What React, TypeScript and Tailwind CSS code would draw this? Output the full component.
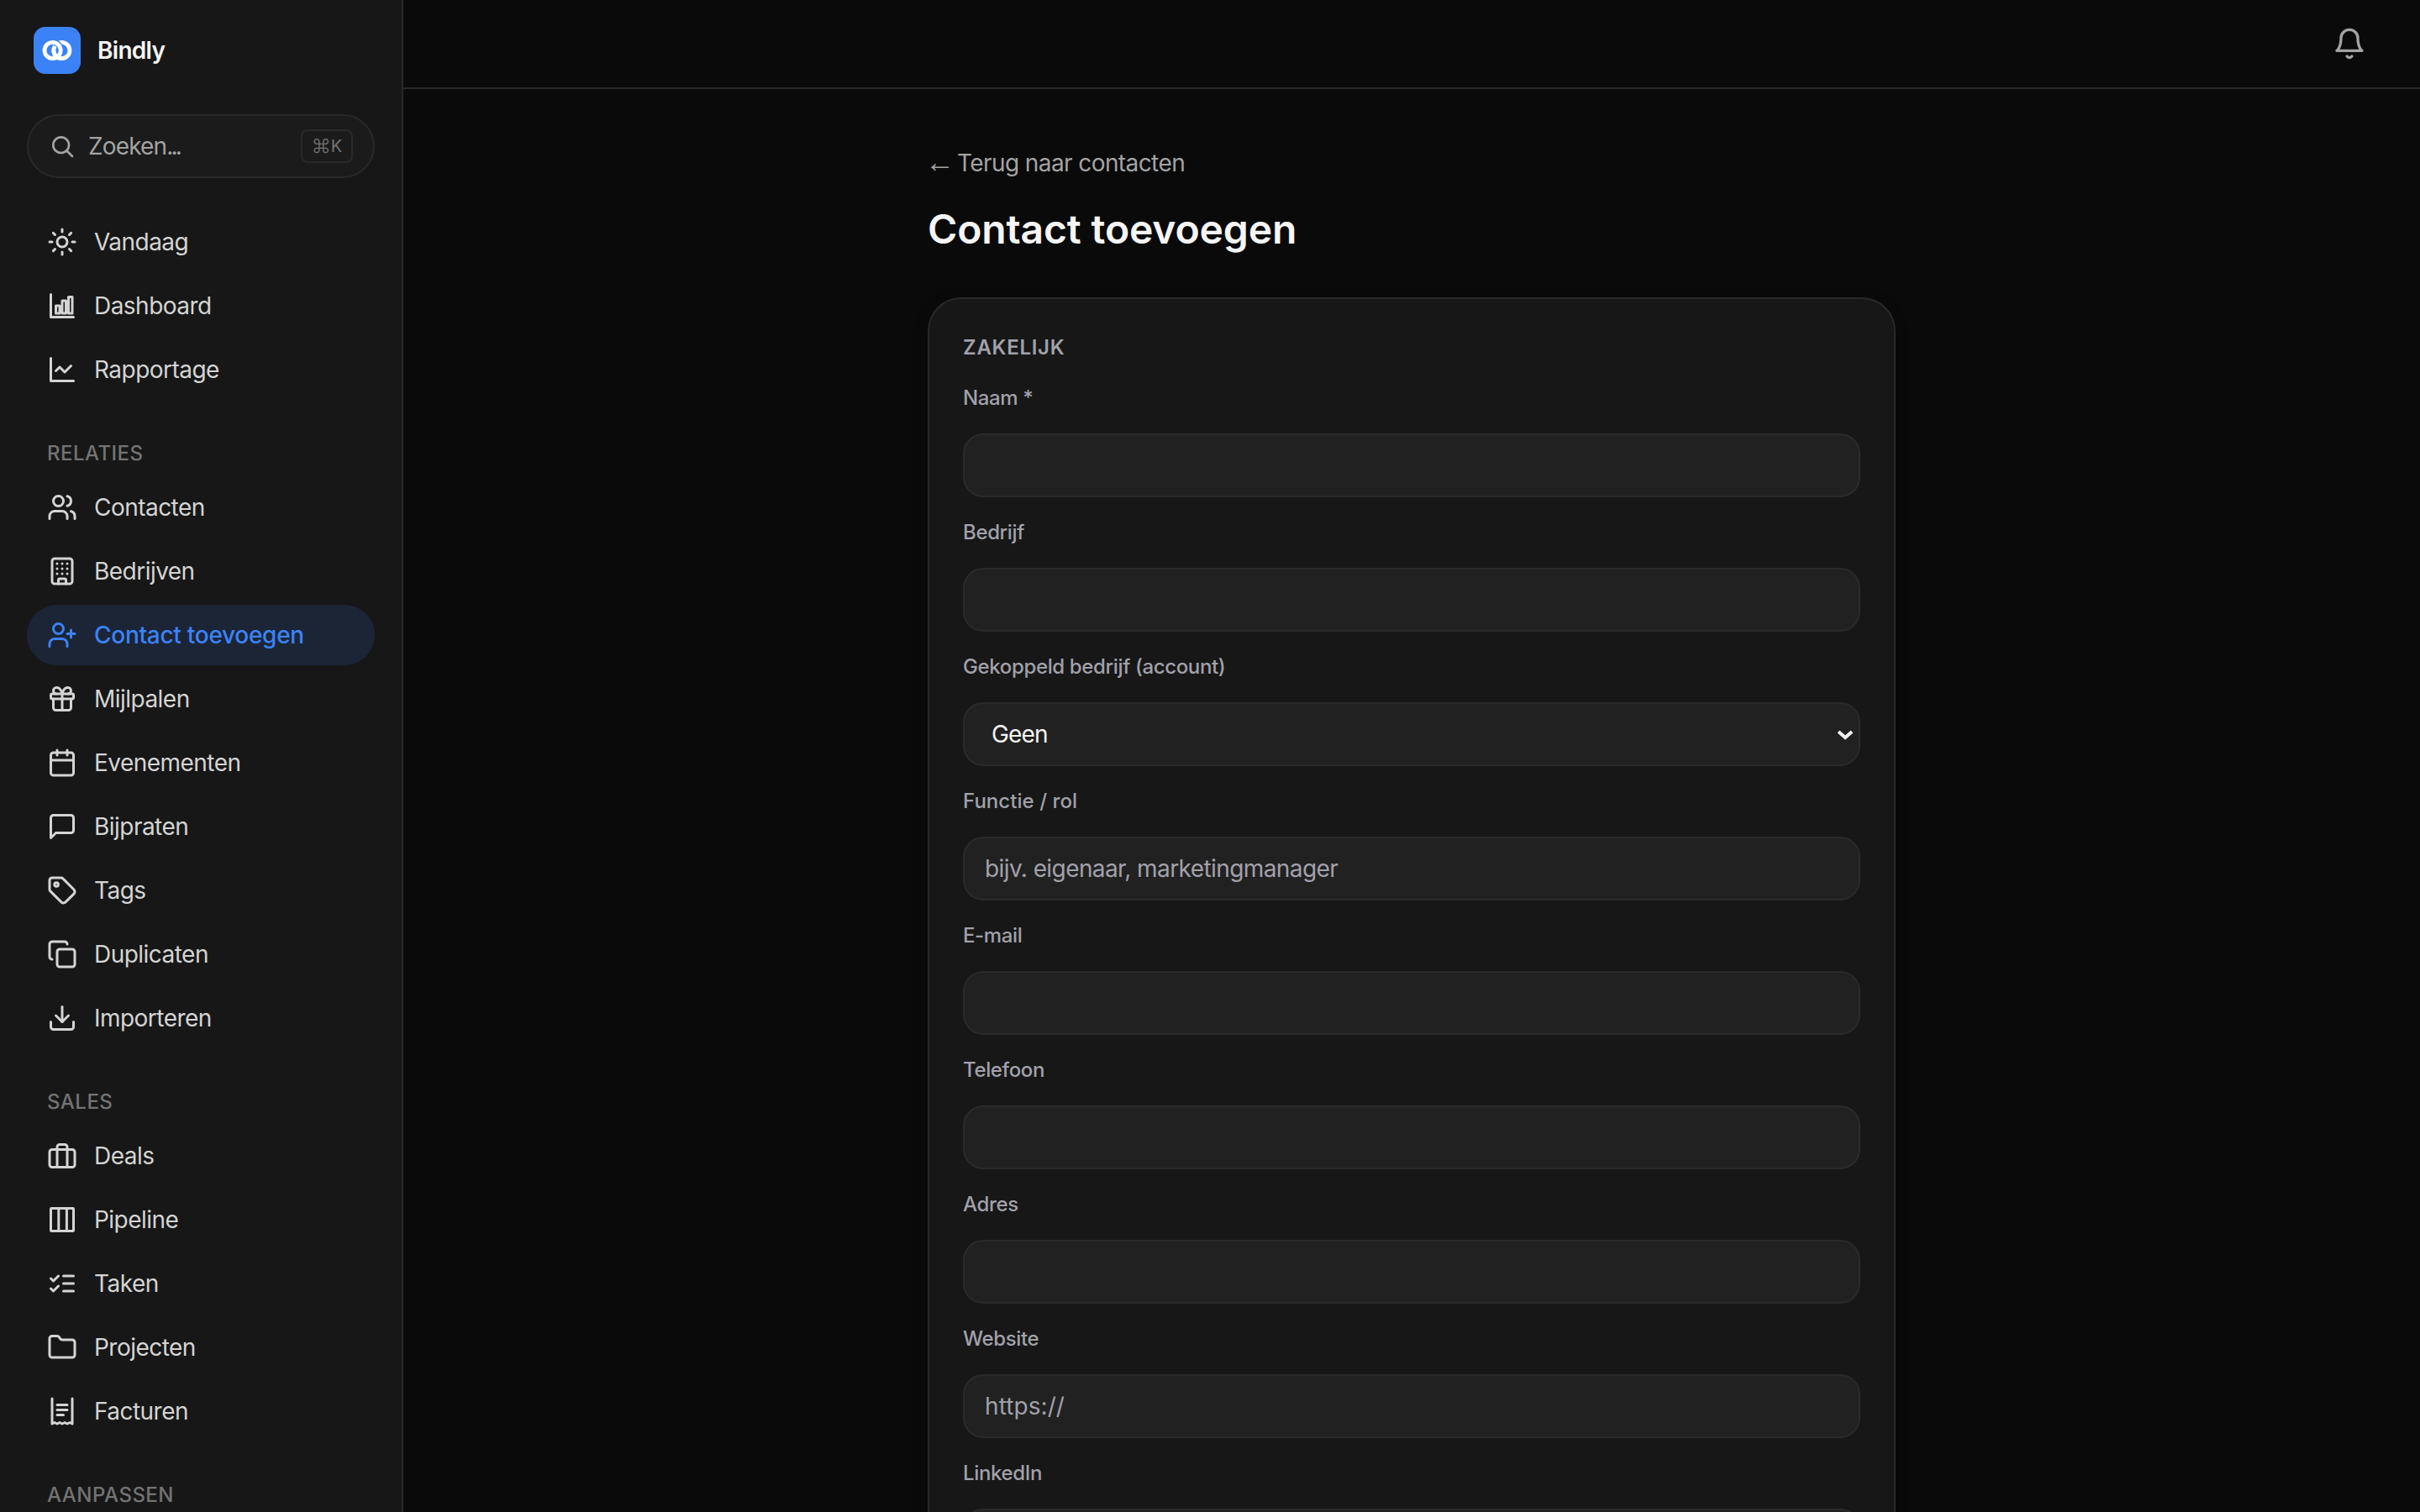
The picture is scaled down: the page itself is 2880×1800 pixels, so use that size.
import { useState } from 'react';
import type { ReactNode } from 'react';
import { Building, Calendar, Copy, Download, Folder, Gift, Sun, UserPlus, Users } from 'lucide-react';

function Icon({ children, className = 'size-9' }: { children: ReactNode; className?: string }) {
  return (
    <svg viewBox="0 0 24 24" fill="none" stroke="currentColor" strokeWidth="2" strokeLinecap="round" strokeLinejoin="round" className={`shrink-0 ${className}`}>
      {children}
    </svg>
  );
}

interface NavItem {
  label: string;
  icon: ReactNode;
}

interface NavGroup {
  title?: string;
  items: NavItem[];
}

const groups: NavGroup[] = [
  {
    items: [
      { label: 'Vandaag', icon: <Sun className="size-9" /> },
      { label: 'Dashboard', icon: <Icon><path d="M3 3v18h18" /><path d="M7 12h3v6H7zM12 8h3v10h-3zM17 5h3v13h-3z" /></Icon> },
      { label: 'Rapportage', icon: <Icon><path d="M3 3v18h18" /><path d="m19 9-5 5-4-4-3 3" /></Icon> },
    ],
  },
  {
    title: 'Relaties',
    items: [
      { label: 'Contacten', icon: <Users className="size-9" /> },
      { label: 'Bedrijven', icon: <Building className="size-9" /> },
      { label: 'Contact toevoegen', icon: <UserPlus className="size-9" /> },
      { label: 'Mijlpalen', icon: <Gift className="size-9" /> },
      { label: 'Evenementen', icon: <Calendar className="size-9" /> },
      { label: 'Bijpraten', icon: <Icon><path d="M21 15a2 2 0 0 1-2 2H7l-4 4V5a2 2 0 0 1 2-2h14a2 2 0 0 1 2 2z" /></Icon> },
      {
        label: 'Tags',
        icon: (
          <Icon>
            <path d="M12.586 2.586A2 2 0 0 0 11.172 2H4a2 2 0 0 0-2 2v7.172a2 2 0 0 0 .586 1.414l8.704 8.704a2.426 2.426 0 0 0 3.42 0l6.58-6.58a2.426 2.426 0 0 0 0-3.42z" />
            <circle cx="7.4" cy="7.4" r="1.5" />
          </Icon>
        ),
      },
      { label: 'Duplicaten', icon: <Copy className="size-9" /> },
      { label: 'Importeren', icon: <Download className="size-9" /> },
    ],
  },
  {
    title: 'Sales',
    items: [
      { label: 'Deals', icon: <Icon><rect x="2" y="7" width="20" height="14" rx="2" /><path d="M16 21V5a2 2 0 0 0-2-2h-4a2 2 0 0 0-2 2v16" /></Icon> },
      { label: 'Pipeline', icon: <Icon><rect x="3" y="3" width="18" height="18" rx="0.5" /><path d="M9.2 3v18M15.6 3v18" /></Icon> },
      { label: 'Taken', icon: <Icon><path d="m3 8 2 2 4-4M3 16l2 2 4-4M13 6h8M13 12h8M13 18h8" /></Icon> },
      { label: 'Projecten', icon: <Folder className="size-9" /> },
      { label: 'Facturen', icon: <Icon><path d="M4 2v20l2-1 2 1 2-1 2 1 2-1 2 1 2-1 2 1V2" /><path d="M8 7h8M8 11h8M8 15h5" /></Icon> },
    ],
  },
  { title: 'Aanpassen', items: [] },
];

function Logo() {
  return (
    <div className="flex size-14 items-center justify-center rounded-[14px] bg-[#3b82f6] text-white">
      <svg viewBox="0 0 36 24" fill="none" stroke="currentColor" strokeWidth="4.8" className="h-6 w-9 overflow-visible">
        <circle cx="23.4" cy="12" r="9.6" />
        <path d="M14 2.4A9.6 9.6 0 0 1 22.2 12" stroke="#3b82f6" strokeWidth="7.4" />
        <circle cx="12.6" cy="12" r="9.6" />
        {/* the right ring passes in front on the lower half */}
        <path d="M13.8 12A9.6 9.6 0 0 0 23.4 21.6" />
      </svg>
    </div>
  );
}

function Sidebar() {
  const [active, setActive] = useState('Contact toevoegen');

  return (
    <aside className="flex w-[480px] shrink-0 flex-col overflow-hidden border-r-2 border-[#292929] bg-[#171717]">
      <div className="flex h-[120px] shrink-0 items-center gap-5 px-10">
        <Logo />
        <span className="text-[28px] font-semibold tracking-[-0.025em] text-[#f5f5f5]">Bindly</span>
      </div>

      <div className="mx-8 mt-4 flex h-[76px] w-[414px] shrink-0 items-center rounded-full border-2 border-[#292929] bg-[#1b1b1b] pr-6 pl-6 text-[#a3a3a3]">
        <Icon className="size-8"><circle cx="11" cy="11" r="7" /><path d="m21 21-4.35-4.35" /></Icon>
        <span className="ml-[15px] flex-1 text-[28px] tracking-[-0.03em]">Zoeken<span className="tracking-[-0.1em]">...</span></span>
        <kbd className="flex h-10 w-[62px] items-center justify-center rounded-lg border-2 border-[#292929] font-[Inter,sans-serif] text-xl text-[#737373]">
          <span className="text-[23px] font-light">⌘</span>K
        </kbd>
      </div>

      <nav className="mt-10 flex flex-col px-8">
        {groups.map((group, i) => (
          <div key={i} className="mb-10 flex flex-col gap-1">
            {group.title && (
              <div className="flex h-12 items-center px-6 text-2xl font-medium tracking-[0.02em] text-[#737373] uppercase">{group.title}</div>
            )}
            {group.items.map((item) => (
              <button
                key={item.label}
                onClick={() => setActive(item.label)}
                className={`flex h-[72px] w-[414px] items-center gap-5 rounded-full px-6 text-left text-[28px] whitespace-nowrap ${active === item.label ? 'bg-[#1c2536] font-medium tracking-[-0.01em] text-[#3b82f6]' : 'tracking-[-0.019em] text-[#d4d4d4]'}`}
              >
                {item.icon}
                {item.label}
              </button>
            ))}
          </div>
        ))}
      </nav>
    </aside>
  );
}

const fields = [
  { label: 'Naam *', name: 'name' },
  { label: 'Bedrijf', name: 'company' },
  { label: 'Gekoppeld bedrijf (account)', name: 'account', options: ['Geen'] },
  { label: 'Functie / rol', name: 'role', placeholder: 'bijv. eigenaar, marketingmanager', labelClass: 'tracking-[0.002em]' },
  { label: 'E-mail', name: 'email' },
  { label: 'Telefoon', name: 'phone' },
  { label: 'Adres', name: 'address' },
  { label: 'Website', name: 'website', placeholder: 'https://', inputClass: 'tracking-[0.003em]' },
  { label: 'LinkedIn', name: 'linkedin' },
];

export default function App() {
  return (
    <div className="flex h-screen overflow-hidden bg-[#0a0a0a] font-[Inter,sans-serif]">
      <Sidebar />
      <div className="flex min-w-0 flex-1 flex-col">
        <header className="flex h-[106px] shrink-0 items-center justify-end border-b-2 border-[#292929] px-16 text-[#a3a3a3]">
          <Icon className="size-10">
            <path d="M18 8A6 6 0 0 0 6 8c0 7-3 9-3 9h18s-3-2-3-9" />
            <path d="M13.73 21a2 2 0 0 1-3.46 0" />
          </Icon>
        </header>
        <main className="flex-1 overflow-hidden">
          <div className="mx-auto w-[1152px] pt-[68px]">
            <a href="#" className="flex h-10 items-center text-[28px] tracking-[-0.021em] text-[#a3a3a3]">
              <span className="-ml-[3px] w-[38px] pb-1 font-['Liberation_Sans',sans-serif] text-[35px] leading-none tracking-normal">←</span>
              <span>Terug naar contacten</span>
            </a>
            <h1 className="mt-[27px] flex h-16 items-center text-5xl font-semibold tracking-[-0.003em] text-[#f5f5f5]">Contact toevoegen</h1>
            <form className="mt-[49px] rounded-[40px] border-2 border-[#292929] bg-[#171717] px-10 pt-10 pb-10 shadow-[0_4px_16px_rgba(0,0,0,0.3)]">
              <h2 className="flex h-9 items-center text-2xl font-semibold tracking-[0.03em] text-[#a1a1aa] uppercase">Zakelijk</h2>
              {fields.map((field) => (
                <div key={field.name} className="flex flex-col pt-6">
                  <label htmlFor={field.name} className={`flex h-9 items-center text-2xl font-medium text-[#a1a1aa] ${field.labelClass ?? 'tracking-[-0.015em]'}`}>{field.label}</label>
                  {field.options ? (
                    <div className="relative mt-6">
                      <select id={field.name} className="h-[76px] w-full appearance-none rounded-3xl border-2 border-[#2a2a2a] bg-[#212121] pl-8 text-[28px] tracking-[-0.03em] text-[#f5f5f5]">
                        {field.options.map((option) => <option key={option}>{option}</option>)}
                      </select>
                      <svg viewBox="0 0 20 14" fill="none" stroke="#f0f0f0" strokeWidth="4" className="absolute top-8 right-2 h-3.5 w-5">
                        <path d="M2 3l8 7 8-7" />
                      </svg>
                    </div>
                  ) : (
                    <input id={field.name} name={field.name} placeholder={field.placeholder} className={`mt-6 h-[76px] w-full rounded-3xl border-2 border-[#2a2a2a] bg-[#212121] px-6 text-[28px] text-[#f5f5f5] placeholder:text-[#a1a1aa] ${field.inputClass ?? 'tracking-[-0.021em]'}`} />
                  )}
                </div>
              ))}
            </form>
          </div>
        </main>
      </div>
    </div>
  );
}
